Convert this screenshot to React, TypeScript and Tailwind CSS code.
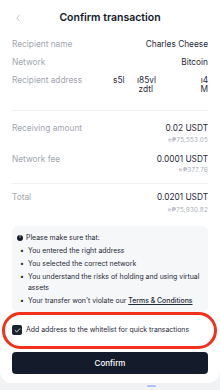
import { Check, ChevronLeft } from 'lucide-react'

interface Row {
  label: string
  value: string
  sub?: string
}

const amounts: Row[] = [
  { label: 'Receiving amount', value: '0.02 USDT', sub: '≈₱75,553.05' },
  { label: 'Network fee', value: '0.0001 USDT', sub: '≈₱377.76' },
]

const bullets = [
  'You entered the right address',
  'You selected the correct network',
  'You understand the risks of holding and using virtual assets',
]

export default function App() {
  return (
    <div className="h-[390px] w-[220px] overflow-hidden bg-[#f1f2f4] font-['Inter',sans-serif]">
      <div className="flex h-[383px] flex-col rounded-b-[12px] bg-white px-[12px]">
        <div className="relative flex h-[36px] items-center justify-center">
          <ChevronLeft className="absolute left-[1px] h-[10px] w-[10px] text-[#9ca3af]" strokeWidth={1.6} />
          <h1 className="text-[10.5px] font-semibold text-[#111827]">Confirm transaction</h1>
        </div>

        <div className="mt-[3px] flex h-[10px] items-center justify-between text-[8.3px] leading-[10px]">
          <span className="text-[#a1a5ad]">Recipient name</span>
          <span className="text-[#1f2937]">Charles Cheese</span>
        </div>
        <div className="mt-[8px] flex h-[10px] items-center justify-between text-[8.3px] leading-[10px]">
          <span className="text-[#a1a5ad]">Network</span>
          <span className="text-[#1f2937]">Bitcoin</span>
        </div>
        <div className="mt-[9px] flex justify-between text-[8.3px] leading-[9px]">
          <span className="text-[#a1a5ad]">Recipient address</span>
          <div className="grid w-[95px] grid-cols-[24px_16px_1fr] text-[#1f2937]">
            <span>s5l</span>
            <span className="text-right">ı85vl</span>
            <span className="text-right">ı4</span>
            <span></span>
            <span className="text-right">zdtl</span>
            <span className="text-right">M</span>
          </div>
        </div>

        <div className="mt-[16px] h-px bg-[#f0f1f3]" />

        {amounts.map((row, i) => (
          <div key={row.label} className={i === 0 ? 'mt-[12px]' : 'mt-[10px]'}>
            <div className="flex h-[10px] items-center justify-between text-[8.3px] leading-[10px]">
              <span className="text-[#a1a5ad]">{row.label}</span>
              <span className="text-[#1f2937]">{row.value}</span>
            </div>
            <div className={`${i === 0 ? 'mt-[3px]' : 'mt-[2px]'} h-[8px] text-right text-[6.3px] leading-[8px] tracking-[0.2px] text-[#a8adb5]`}>
              {row.sub}
            </div>
          </div>
        ))}

        <div className="mt-[9px] h-px bg-[#f0f1f3]" />

        <div className="mt-[8px] flex h-[10px] items-center justify-between text-[8.3px] leading-[10px]">
          <span className="text-[#a1a5ad]">Total</span>
          <span className="text-[#1f2937]">0.0201 USDT</span>
        </div>
        <div className="mt-[4px] h-[8px] text-right text-[6.3px] leading-[8px] tracking-[0.2px] text-[#a8adb5]">
          ≈₱75,930.82
        </div>

        <div className="mt-[12px] flex flex-col gap-[2px] rounded-[6px] bg-[#f6f7f9] px-[5px] pb-[6px] pt-[6px] text-[6.9px] leading-[11px] text-[#1f2937]">
          <div className="flex items-center gap-[3px]">
            <span className="flex h-[6px] w-[6px] items-center justify-center rounded-full bg-[#111827] text-[4.5px] font-bold leading-none text-white">
              !
            </span>
            <span>Please make sure that:</span>
          </div>
          {bullets.map((text) => (
            <div key={text} className="flex">
              <span className="w-[11px] shrink-0 pl-[3px]">•</span>
              <span>{text}</span>
            </div>
          ))}
          <div className="flex">
            <span className="w-[11px] shrink-0 pl-[3px]">•</span>
            <span>
              Your transfer won't violate our <span className="font-medium underline">Terms &amp; Conditions</span>
            </span>
          </div>
        </div>

        <div className="relative mt-[2px] flex h-[32px] items-center gap-[4px]">
          <span className="flex h-[10px] w-[10px] items-center justify-center rounded-[2px] bg-[#1b2232]">
            <Check className="h-[7px] w-[7px] text-white" strokeWidth={3} />
          </span>
          <span className="text-[6.9px] text-[#1f2937]">Add address to the whitelist for quick transactions</span>
          <div className="pointer-events-none absolute -bottom-[3px] -left-[10px] -right-[9px] -top-[2px] rounded-full border-[3px] border-[#f3301c]" />
        </div>

        <button className="mt-[6px] flex h-[22px] items-center justify-center rounded-[4px] bg-[#141b2a] text-[8px] font-medium text-white">
          Confirm
        </button>
      </div>
      <div className="relative h-[7px]">
        <div className="absolute left-[147px] top-[2px] h-[2px] w-[9px] rounded-full bg-[#a9c4f5]" />
      </div>
    </div>
  )
}
